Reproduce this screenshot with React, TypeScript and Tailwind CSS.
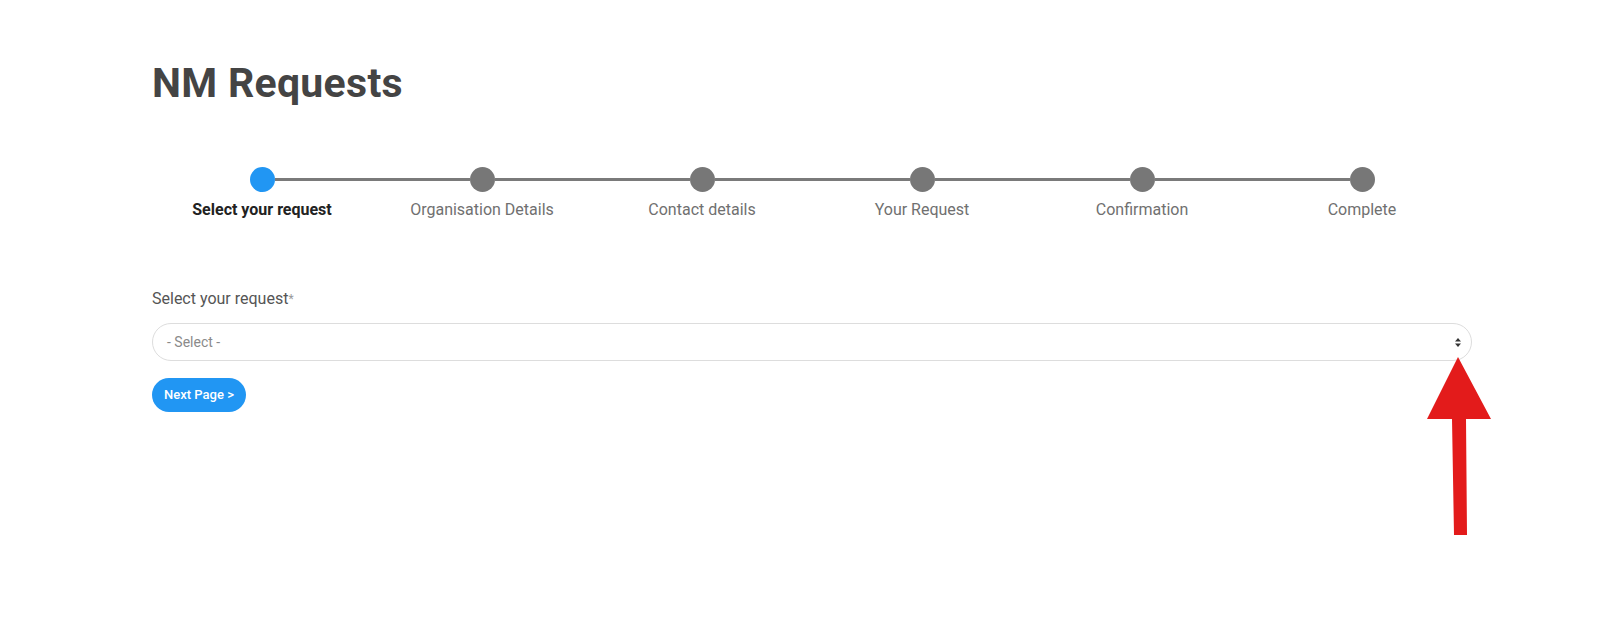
import React from "react";

const steps = [
  "Select your request",
  "Organisation Details",
  "Contact details",
  "Your Request",
  "Confirmation",
  "Complete",
];

export default function App() {
  return (
    <div
      className="relative min-h-[617px] w-full bg-white"
      style={{ fontFamily: "Roboto, 'Open Sans', sans-serif" }}
    >
      <div className="ml-[152px] w-[1320px] pt-[59px]">
        <h1 className="text-[41px] font-bold leading-[48px] text-[#444444] tracking-[0.3px]">
          NM Requests
        </h1>

        <div className="mt-[60px] grid grid-cols-6">
          {steps.map((s, i) => (
            <div key={s} className="flex flex-col items-center">
              <div className="flex w-full items-center">
                <div
                  className={
                    i === 0
                      ? "h-[3px] flex-1 bg-transparent"
                      : "h-[3px] flex-1 bg-[#7a7a7a]"
                  }
                />
                <div
                  className={
                    i === 0
                      ? "h-[25px] w-[25px] rounded-full bg-[#2196f3]"
                      : "h-[25px] w-[25px] rounded-full bg-[#777777]"
                  }
                />
                <div
                  className={
                    i === steps.length - 1
                      ? "h-[3px] flex-1 bg-transparent"
                      : "h-[3px] flex-1 bg-[#7a7a7a]"
                  }
                />
              </div>
              <div
                className={
                  i === 0
                    ? "mt-[7px] text-[16px] font-bold leading-[22px] text-[#222222]"
                    : "mt-[7px] text-[16px] leading-[22px] text-[#707070]"
                }
              >
                {s}
              </div>
            </div>
          ))}
        </div>

        <div className="mt-[67px] text-[16px] leading-[22px] text-[#555555]">
          Select your request<span className="text-[#999999] text-[12px] align-top">*</span>
        </div>

        <div className="mt-[13px] flex h-[38px] w-full items-center justify-between rounded-full border border-[#dddddd] pl-[14px] pr-[10px]">
          <span className="text-[14px] text-[#8a8a8a]">- Select -</span>
          <svg width="6" height="9" viewBox="0 0 6 9">
            <path d="M3 0 L6 3.5 L0 3.5 Z" fill="#333333" />
            <path d="M3 9 L6 5.5 L0 5.5 Z" fill="#333333" />
          </svg>
        </div>

        <button className="mt-[17px] h-[34px] w-[94px] rounded-full bg-[#2196f3] text-[13px] font-medium text-white">
          Next Page &gt;
        </button>
      </div>

      <svg
        className="absolute left-[1425px] top-[355px]"
        width="70"
        height="184"
        viewBox="0 0 70 184"
      >
        <path
          d="M33 2 L66 64 L41 64 L42 180 L29 180 L27 64 L2 64 Z"
          fill="#e31b1b"
        />
      </svg>
    </div>
  );
}
